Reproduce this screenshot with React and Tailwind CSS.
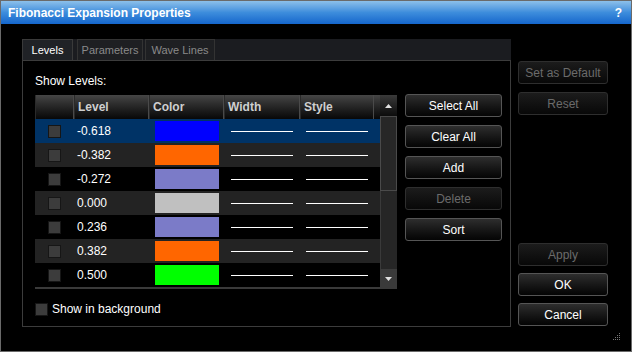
import React from "react";

const rows = [
  { v: "-0.618", c: "#0000ff", bg: "bg-[#003366]" },
  { v: "-0.382", c: "#ff6600", bg: "bg-[#232323]" },
  { v: "-0.272", c: "#7b7bc8", bg: "bg-black" },
  { v: "0.000", c: "#c0c0c0", bg: "bg-[#232323]" },
  { v: "0.236", c: "#7b7bc8", bg: "bg-black" },
  { v: "0.382", c: "#ff6600", bg: "bg-[#232323]" },
  { v: "0.500", c: "#00ff00", bg: "bg-black" },
];

function Btn({ children, disabled }) {
  return (
    <div
      className={
        "flex h-[23px] items-center justify-center rounded-[3px] border text-[12px] " +
        (disabled
          ? "border-[#2e2e2e] bg-gradient-to-b from-[#1c1c1c] to-[#080808] text-[#6b6b6b]"
          : "border-[#555] bg-gradient-to-b from-[#2e2e2e] to-[#050505] text-white")
      }
    >
      {children}
    </div>
  );
}

function Check() {
  return <div className="h-[13px] w-[13px] border border-[#161616] bg-[#3c3c3c]" />;
}

function HeadCell({ w, children }) {
  return (
    <div
      className={`${w} flex h-full items-center border-r border-r-[#4a4a4a] border-l border-l-[#2a2a2a] pl-[3px] text-[12px] font-bold text-[#cfcfcf]`}
    >
      {children}
    </div>
  );
}

export default function App() {
  return (
    <div
      className="relative flex h-[352px] w-[632px] flex-col border border-[#6a6a6a] bg-black text-white"
      style={{ fontFamily: '"Liberation Sans", Arial, sans-serif' }}
    >
      {/* Title bar */}
      <div className="flex h-[23px] items-center justify-between bg-gradient-to-b from-[#8cc0ea] via-[#3d8ddc] to-[#1466cc] pl-[7px] pr-[9px]">
        <span className="text-[12px] font-bold text-white">Fibonacci Expansion Properties</span>
        <span className="text-[12px] font-bold text-white">?</span>
      </div>

      <div className="flex flex-1 pl-[21px] pt-[15px]">
        {/* Panel */}
        <div className="flex w-[489px] flex-col">
          {/* Tabs */}
          <div className="flex h-[21px] items-end bg-[#1b1c20]">
            <div className="flex h-[21px] w-[51px] items-center justify-center border border-b-0 border-[#3a3a3a] bg-[#202226] text-[11px] text-white">
              Levels
            </div>
            <div className="ml-[4px] flex h-[21px] w-[66px] items-center justify-center border border-b-0 border-[#333] bg-[#1e1f22] text-[11px] text-[#8a8a8a]">
              Parameters
            </div>
            <div className="ml-[2px] flex h-[21px] w-[70px] items-center justify-center border border-b-0 border-[#333] bg-[#1e1f22] text-[11px] text-[#8a8a8a]">
              Wave Lines
            </div>
          </div>
          <div className="flex h-[267px] w-[489px] flex-col border border-[#3c3c3c] pl-[12px]">
            <div className="mt-[11px] h-[16px] text-[12px] text-white">Show Levels:</div>
            <div className="mt-[7px] flex">
              {/* Table */}
              <div className="flex h-[194px] w-[362px]">
                <div className="flex w-[345px] flex-col border-b-2 border-b-[#3a3a3a]">
                  <div className="flex h-[24px] bg-gradient-to-b from-[#464646] to-[#080808]">
                    <HeadCell w="w-[39px]"></HeadCell>
                    <HeadCell w="w-[75px]">Level</HeadCell>
                    <HeadCell w="w-[75px]">Color</HeadCell>
                    <HeadCell w="w-[76px]">Width</HeadCell>
                    <HeadCell w="w-[74px]">Style</HeadCell>
                    <div className="w-[6px]" />
                  </div>
                  {rows.map((r, i) => (
                    <div key={i} className={`flex h-[24px] items-center ${r.bg}`}>
                      <div className="flex w-[39px] justify-center">
                        <Check />
                      </div>
                      <div className="w-[75px] pl-[3px] text-[12px] text-white">{r.v}</div>
                      <div className="w-[75px] pl-[6px]">
                        <div className="h-[20px] w-[64px]" style={{ background: r.c }} />
                      </div>
                      <div className="w-[76px] pl-[7px]">
                        <div className="h-px w-[62px] bg-white" />
                      </div>
                      <div className="w-[74px] pl-[6px]">
                        <div className="h-px w-[62px] bg-white" />
                      </div>
                    </div>
                  ))}
                </div>
                {/* Scrollbar */}
                <div className="flex w-[17px] flex-col">
                  <div className="flex h-[21px] items-center justify-center bg-gradient-to-b from-[#3a3a3a] to-[#0c0c0c]">
                    <svg width="7" height="4" viewBox="0 0 7 4">
                      <polygon points="0,4 7,4 3.5,0" fill="#e0e0e0" />
                    </svg>
                  </div>
                  <div className="h-[75px] border border-[#4a4a4a] bg-[#272727]" />
                  <div className="h-[78px] border-l border-[#3a3a3a] bg-[#262626]" />
                  <div className="flex h-[20px] items-center justify-center bg-[#3a3a3a]">
                    <svg width="7" height="4" viewBox="0 0 7 4">
                      <polygon points="0,0 7,0 3.5,4" fill="#e0e0e0" />
                    </svg>
                  </div>
                </div>
              </div>
              {/* Middle buttons */}
              <div className="-mt-px ml-[8px] flex w-[97px] flex-col gap-[8px]">
                <Btn>Select All</Btn>
                <Btn>Clear All</Btn>
                <Btn>Add</Btn>
                <Btn disabled>Delete</Btn>
                <Btn>Sort</Btn>
              </div>
            </div>
            <div className="mt-[11px] flex items-center gap-[4px]">
              <Check />
              <span className="text-[12px] text-white">Show in background</span>
            </div>
          </div>
        </div>

        {/* Right column */}
        <div className="ml-[7px] flex w-[90px] flex-col pt-[22px]">
          <div className="flex flex-col gap-[8px]">
            <Btn disabled>Set as Default</Btn>
            <Btn disabled>Reset</Btn>
          </div>
          <div className="mt-[128px] flex flex-col gap-[7px]">
            <Btn disabled>Apply</Btn>
            <Btn>OK</Btn>
            <Btn>Cancel</Btn>
          </div>
        </div>
      </div>

      {/* resize grip */}
      <svg className="absolute bottom-[10px] right-[10px]" width="8" height="8" viewBox="0 0 8 8">
        {[
          [6, 0], [4, 2], [6, 2], [2, 4], [4, 4], [6, 4], [0, 6], [2, 6], [4, 6], [6, 6],
        ].map(([x, y], i) => (
          <rect key={i} x={x} y={y} width="1" height="1" fill="#777" />
        ))}
      </svg>
    </div>
  );
}
